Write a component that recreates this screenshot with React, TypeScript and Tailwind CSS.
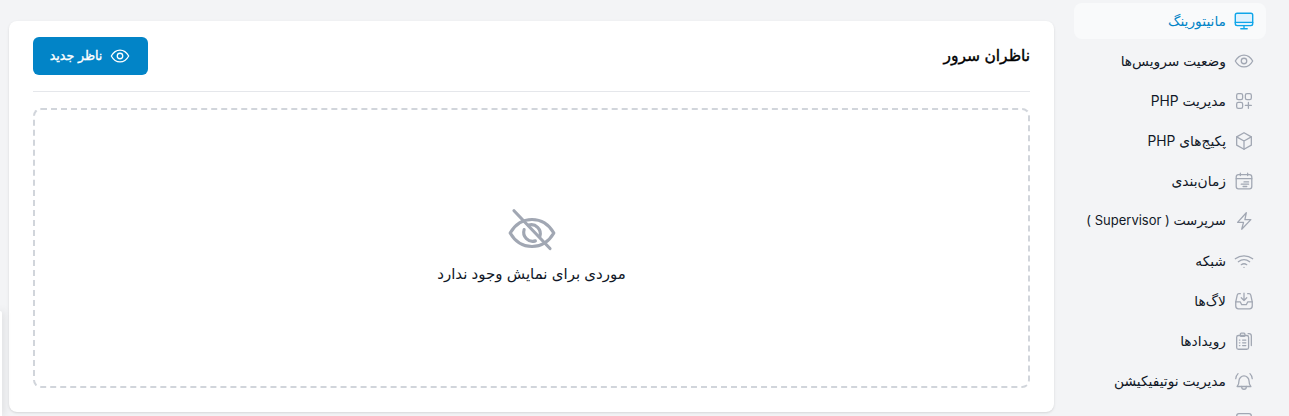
import type { ReactNode } from "react"

function Ico({ children, className = "text-[#a1a7b3]" }: { children: ReactNode; className?: string }) {
  return (
    <svg viewBox="0 0 24 24" fill="none" stroke="currentColor" strokeWidth={1.4} strokeLinecap="round" strokeLinejoin="round" className={`w-[22px] h-[22px] shrink-0 ${className}`}>
      {children}
    </svg>
  )
}

function EyeIcon({ className }: { className?: string }) {
  return (
    <Ico className={className}>
      <path d="M2.500 12c2.400-4.300 5.600-6.500 9.500-6.500s7.100 2.200 9.500 6.500c-2.400 4.300-5.600 6.500-9.500 6.500S4.900 16.300 2.500 12Z" />
      <circle cx="12" cy="12" r="3" />
    </Ico>
  )
}

const items: { label: string; icon: ReactNode; size?: string }[] = [
  {
    label: "وضعیت سرویس‌ها",
    icon: <EyeIcon />,
  },
  {
    label: "مدیریت PHP",
    icon: (
      <Ico>
        <rect x="4" y="4" width="6.500" height="6.500" rx="1.800" />
        <rect x="13.500" y="4" width="6.500" height="6.500" rx="1.800" />
        <rect x="4" y="13.500" width="6.500" height="6.500" rx="1.800" />
        <path d="M16.800 13.500v6.500M13.500 16.800H20" />
      </Ico>
    ),
  },
  {
    label: "پکیج‌های PHP",
    icon: (
      <Ico>
        <path d="M12 3 20 7.500v9L12 21l-8-4.500v-9L12 3Z" />
        <path d="M4 7.500l8 4.500 8-4.500M12 12v9" />
      </Ico>
    ),
  },
  {
    label: "زمان‌بندی",
    icon: (
      <Ico>
        <rect x="3.500" y="5" width="17" height="15.500" rx="2.500" />
        <path d="M3.500 9.500h17M8 3.500V6M16 3.500V6M12 13h5M9 15.500h8M11 18h4" />
      </Ico>
    ),
  },
  {
    label: "سرپرست ( Supervisor )",
    size: "text-[13px]",
    icon: (
      <Ico>
        <path d="M14.500 3 5 13.500h6.500L9.500 21 19.500 10.500H13L14.500 3Z" />
      </Ico>
    ),
  },
  {
    label: "شبکه",
    icon: (
      <Ico>
        <path d="M2.500 9.500c5.500-4.200 13.500-4.200 19 0M5.800 12.800c3.700-2.700 8.700-2.700 12.400 0M9 16c1.800-1.200 4.200-1.200 6 0" />
        <path d="M12 19h.01" />
      </Ico>
    ),
  },
  {
    label: "لاگ‌ها",
    icon: (
      <Ico>
        <path d="M8 4H6.500A2 2 0 0 0 4.600 5.500L3 13v4.500A3 3 0 0 0 6 20.500h12a3 3 0 0 0 3-3V13l-1.600-7.500A2 2 0 0 0 17.500 4H16" />
        <path d="M3 13h5l1.500 3h5l1.500-3h5M12 3.500v8M9 8.500l3 3 3-3" />
      </Ico>
    ),
  },
  {
    label: "رویدادها",
    icon: (
      <Ico>
        <path d="M16.500 4h1A2.500 2.500 0 0 1 20 6.500V17" />
        <rect x="4" y="6" width="13" height="15" rx="2" />
        <rect x="8" y="3.500" width="5" height="3.500" rx="1" />
        <path d="M10.500 11H14M10.500 14H14M10.500 17H14M7 11h.5M7 14h.5M7 17h.5" />
      </Ico>
    ),
  },
  {
    label: "مدیریت نوتیفیکیشن",
    icon: (
      <Ico>
        <path d="M4.500 18c1.500-1.500 2-3.200 2-6a5.500 5.500 0 0 1 11 0c0 2.800.5 4.500 2 6h-15Z" />
        <path d="M9.500 18v.5a2.500 2.500 0 0 0 5 0V18M3 9.500c.2-2.200 1-4 2.500-5.500M21 9.500c-.2-2.200-1-4-2.500-5.500" />
      </Ico>
    ),
  },
  {
    label: "تنظیمات",
    icon: (
      <Ico>
        <rect x="4" y="4" width="16" height="16" rx="2.500" />
      </Ico>
    ),
  },
]

export default function App() {
  return (
    <div dir="rtl" className="relative h-[416px] overflow-hidden bg-[#f3f4f6] flex font-['Inter','DejaVu_Sans',sans-serif] text-[#111827]">
      {/* sidebar */}
      <aside className="w-[192px] shrink-0 mr-[23px] pt-[3px] flex flex-col gap-1">
        <a className="h-9 shrink-0 rounded-lg bg-[#f9fafb] pr-[11px] flex items-center gap-[7px] text-[13.8px] text-[#0284c7]">
          <svg viewBox="0 0 24 24" fill="#e0f2fe" stroke="currentColor" strokeWidth={1.5} strokeLinecap="round" strokeLinejoin="round" className="w-[22px] h-[22px] shrink-0 text-[#0ea5e9]">
            <rect x="2.500" y="3.500" width="19" height="13.500" rx="2" />
            <path d="M2.500 13.500h19M8.500 20.500h7M12 17v3.500" fill="none" />
          </svg>
          <span>مانیتورینگ</span>
        </a>
        {items.map((item) => (
          <a key={item.label} className={`h-9 shrink-0 rounded-lg pr-[11px] flex items-center gap-[7px] ${item.size ?? "text-[13.8px]"}`}>
            {item.icon}
            <span>{item.label}</span>
          </a>
        ))}
      </aside>

      {/* main card */}
      <main className="w-[1045px] h-[391px] mr-[20px] mt-[21px] bg-white rounded-lg shadow-sm px-6 flex flex-col">
        <div className="h-[71px] shrink-0 border-b border-[#e5e7eb] flex items-start justify-between pt-4">
          <h2 className="text-[15.500px] font-normal text-black mt-[7px] [-webkit-text-stroke:0.4px_currentColor]">ناظران سرور</h2>
          <button className="h-[38px] w-[115px] rounded-md bg-[#0284c7] text-white text-[12.700px] flex items-center justify-center gap-[7px] [-webkit-text-stroke:0.35px_currentColor]">
            <EyeIcon className="text-white" />
            <span>ناظر جدید</span>
          </button>
        </div>
        <div className="mt-4 h-[280px] rounded-lg border-2 border-dashed border-[#d1d5db] flex flex-col items-center justify-center gap-[3px] pb-[5px]">
          <svg viewBox="0 0 24 24" fill="none" stroke="#a1a7b3" strokeWidth={1.4} strokeLinecap="round" strokeLinejoin="round" className="w-[54px] h-[54px]">
            <path d="M2.300 12c2.300-4 5.500-6 9.700-6s7.400 2 9.700 6c-2.300 4-5.500 6-9.700 6s-7.400-2-9.700-6Z" />
            <path d="M10.500 8.500a4 4 0 0 1 5 5M13.500 15.500a4 4 0 0 1-5-5" />
            <path d="M4 2.100l16 16.800" />
          </svg>
          <p className="text-[15px]">موردی برای نمایش وجود ندارد</p>
        </div>
      </main>

      {/* edge of a panel sticking in from the left */}
      <div className="absolute left-0 top-[311px] w-[2px] h-[105px] bg-white rounded-tr shadow-[0_0_8px_rgba(0,0,0,0.3)]" />
    </div>
  )
}
